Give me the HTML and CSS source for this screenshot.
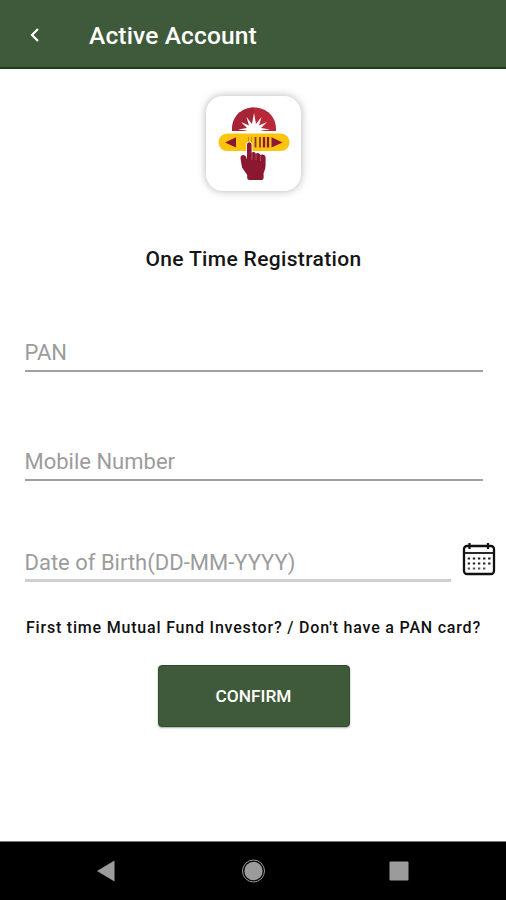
FILE: index.html
```html
<!DOCTYPE html>
<html lang="en">
<head>
<meta charset="utf-8">
<title>Active Account</title>
<link rel="stylesheet" href="styles.css">
</head>
<body>
<div class="screen">
  <header class="appbar">
    <svg class="back" width="12" height="18" viewBox="0 0 12 18"><path d="M10 3 4 9l6 6"/></svg>
    <h1 class="title">Active Account</h1>
  </header>
  <main class="content">
    <div class="logo">
      <svg width="95" height="95" viewBox="0 0 95 95">
        <path fill="#b92838" d="M26 35V33C26 21 35 11.500 48 11.500S70 21 70 33v2z"/>
        <path fill="#982135" opacity=".55" d="M26 35V33C26 21 35 11.500 48 11.500V35z"/>
        <path fill="#fff" d="M40 38 40.500 34.500 32 33.500l9-1.500L35 26l8 3.500L40.500 21l5.500 7L48 17l2 11L55.500 21 53 29.500l8-3.500-6 6 9 1.500-8.500 1L56 38z"/>
        <rect x="12.500" y="37.500" width="71" height="17.500" rx="8.750" fill="#fcc40d"/>
        <path fill="#8b1833" d="M30 41.300v10.200L19 46.400zM65.500 41.300v10.200l11-5.100z"/>
        <path stroke="#b99218" stroke-width="1" d="M42.500 41v10.500M45.500 41v10.500"/>
        <path stroke="#8b3b22" stroke-width="1.800" d="M49.500 41v10.500M54 41v10.500"/>
        <path stroke="#8b1b30" stroke-width="2.300" d="M58 41v10.500M62 41v10.500"/>
        <path fill="#8c1730" stroke="#fff" stroke-width="1.500" paint-order="stroke" d="M41 49c0-3.800 4.600-3.800 4.600 0v8c1.200-1.600 3.600-1 4.200.8 1.300-1.500 4-.8 4.500 1.200 2.100-1.400 5.300-.3 5.300 2.600v6.900c0 3.700-1 6-2 8.500v5q0 2-2 2H43.200q-2 0-2-2v-3L36 71.500l-1.500-9c-.3-3 2.500-4.500 5-2.500l1.500 3z"/>
        <path fill="none" stroke="#ca6677" stroke-width=".7" d="M46 57v7M50 58v6M54.500 60v5"/>
      </svg>
    </div>
    <h2 class="heading">One Time Registration</h2>
    <div class="field pan"><span class="hint">PAN</span></div>
    <div class="field mobile"><span class="hint">Mobile Number</span></div>
    <div class="date-row">
      <div class="field dob"><span class="hint">Date of Birth(DD-MM-YYYY)</span></div>
      <svg class="calendar" width="34" height="36" viewBox="0 0 34 36">
        <rect x="2" y="5" width="30" height="28" rx="3" fill="none" stroke="#111" stroke-width="2.300"/>
        <path stroke="#111" stroke-width="1.800" d="M2 12h30"/>
        <path stroke="#111" stroke-width="2.200" d="M7.500 2v6M26 2v6"/>
        <path stroke="#222" stroke-width="2" stroke-dasharray="2.400 2.700" d="M5.700 17.500h23M5.700 22.500h23"/>
        <path stroke="#555" stroke-width="2" stroke-dasharray="2.400 2.700" d="M5.700 27.500h18"/>
      </svg>
    </div>
    <p class="question">First time Mutual Fund Investor? / Don't have a PAN card?</p>
    <button class="confirm">CONFIRM</button>
  </main>
  <footer class="navbar">
    <svg width="506" height="58" viewBox="0 0 506 58" fill="#9b9b9b">
      <path d="M97 29 114.500 18.500v21z"/>
      <circle cx="253.500" cy="29" r="9.200"/>
      <circle cx="253.500" cy="29" r="11" fill="none" stroke="#9b9b9b" stroke-width="1"/>
      <rect x="389.500" y="19.500" width="19" height="19" rx="1"/>
    </svg>
  </footer>
</div>
</body>
</html>
```
FILE: styles.css
```css
* { box-sizing: border-box; }
body { margin: 0; font-family: Roboto, "Liberation Sans", sans-serif; background: #fff; }
.screen { width: 506px; height: 900px; display: flex; flex-direction: column; overflow: hidden; }
.appbar { height: 69px; flex: none; display: flex; align-items: center; padding: 2px 0 0 28px; background: #3f5a3b; border-bottom: 2px solid #1c401b; }
.back { fill: none; stroke: #fff; stroke-width: 2.2; }
.title { margin: 3px 0 0 49px; font-size: 24.5px; line-height: 30px; font-weight: 500; letter-spacing: .15px; color: #fff; white-space: nowrap; }
.content { flex: 1; display: flex; flex-direction: column; align-items: center; }
.logo { width: 95px; height: 95px; flex: none; margin: 27px 0 0 1px; border-radius: 17px; background: #fff; box-shadow: 0 0 8px rgba(0, 0, 0, .3); }
.logo svg { display: block; }
.heading { margin: 53px 0 0 1px; font-size: 21px; line-height: 30px; font-weight: 500; letter-spacing: .35px; color: #151515; white-space: nowrap; }
.field { display: flex; align-items: flex-end; height: 40px; padding-bottom: 4px; border-bottom: 2px solid #a0a0a0; }
.pan, .mobile { width: 458px; margin-left: 1px; }
.pan { margin-top: 58px; }
.mobile { margin-top: 69px; }
.hint { font-size: 22px; line-height: 26px; color: #9c9c9c; font-weight: 400; white-space: nowrap; }
.date-row { width: 458px; height: 41px; margin: 60px 0 0 1px; display: flex; }
.dob { width: 426px; height: 41px; flex: none; padding-bottom: 3px; border-bottom: 3px solid #cfcfcf; }
.calendar { flex: none; margin-left: 11px; }
.question { margin: 34px 0 0 1px; font-size: 16px; line-height: 24px; font-weight: 500; letter-spacing: .8px; color: #111; white-space: nowrap; }
.confirm { width: 192px; height: 62px; margin: 25px 0 0 1px; padding: 0; border: 1px solid #2c4e2b; border-radius: 4px; background: #3f5a3b; color: #fff; font: 500 17.3px Roboto, sans-serif; box-shadow: 0 1px 2px rgba(0, 0, 0, .35); }
.navbar { flex: none; height: 59px; background: #000; border-top: 1px solid #777; }
.navbar svg { display: block; }
```
